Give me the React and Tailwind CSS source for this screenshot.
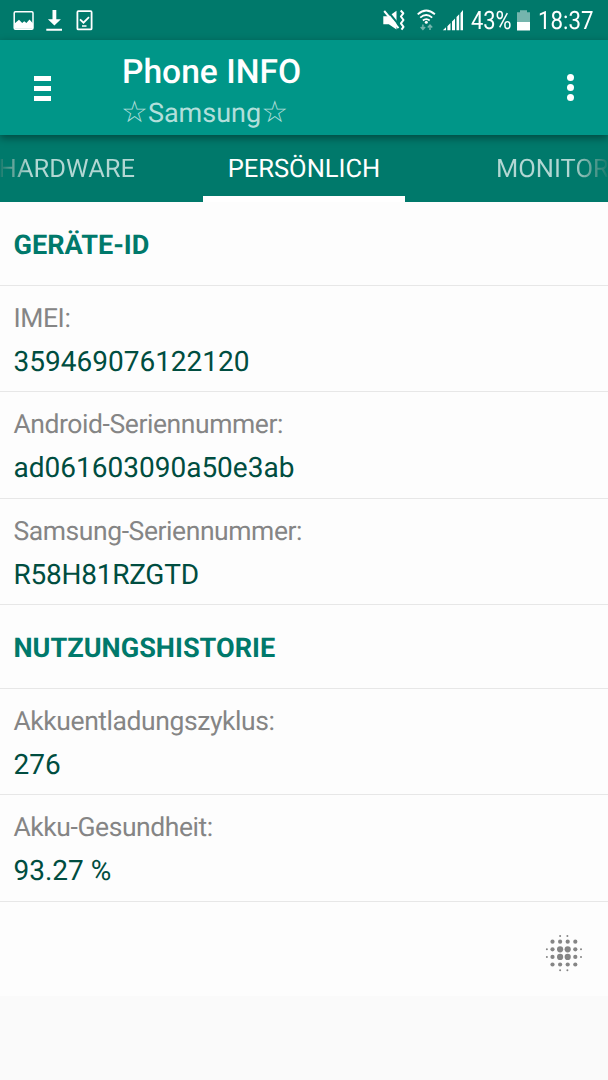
import React from 'react'

const sections = [
  {
    title: 'GERÄTE-ID',
    rows: [
      { label: 'IMEI:', value: '359469076122120' },
      { label: 'Android-Seriennummer:', value: 'ad061603090a50e3ab' },
      { label: 'Samsung-Seriennummer:', value: 'R58H81RZGTD', tight: true },
    ],
  },
  {
    title: 'NUTZUNGSHISTORIE',
    rows: [
      { label: 'Akkuentladungszyklus:', value: '276' },
      { label: 'Akku-Gesundheit:', value: '93.27 %' },
    ],
  },
]

// x, y, radius of every dot in the round spinner
const dots = [
  [14.1, 3, 1], [21.4, 3, 1],
  [6.5, 8.7, 2.1], [14.1, 8.7, 2.1], [21.7, 8.7, 2.1], [29.3, 8.7, 2.1],
  [0.9, 16.3, 1], [6.5, 16.3, 2.1], [14.1, 16.3, 3.1], [21.7, 16.3, 3.1], [29.3, 16.3, 2.1], [35, 16.3, 1],
  [0.9, 23.9, 1], [6.5, 23.9, 2.1], [14.1, 23.9, 3.1], [21.7, 23.9, 3.1], [29.3, 23.9, 2.1], [35, 23.9, 1],
  [6.5, 31.5, 2.1], [14.1, 31.5, 2.1], [21.7, 31.5, 2.1], [29.3, 31.5, 2.1],
  [14.1, 37.2, 1], [21.4, 37.2, 1],
]

const StatusBar = () => (
  <div className="h-10 bg-[#00796b] flex items-center justify-between text-white">
    <svg className="w-[110px] h-10" viewBox="0 0 110 40" fill="none">
      <rect x="14.2" y="11.7" width="18.8" height="17.6" rx="1.2" stroke="#fff" strokeWidth="1.5" />
      <path d="M14.5 23.5l4.5-3.8 3.2 3.3 2-1.7 2.2 1.7 3.1-3.6 3.5 4v5.4H14.5z" fill="#fff" />
      <path d="M52.5 10h3.8v9.2h4.6l-6.5 6.4-6.5-6.4h4.6zM46.3 28.7H62v2H46.3z" fill="#fff" />
      <rect x="77.4" y="11.2" width="14.2" height="18.2" rx="1" stroke="#fff" strokeWidth="1.8" />
      <path d="M80 19.3l3.5 3.4 5.5-5.5" stroke="#fff" strokeWidth="1.8" />
      <path d="M82 26h4.5" stroke="#fff" strokeWidth="1.5" />
    </svg>
    <div className="flex items-center">
      <svg className="w-[92px] h-10" viewBox="378 0 92 40" fill="none">
        {/* muted speaker with vibration */}
        <path d="M383.3 16.2h5.5l7.7-5.5v18.9l-7.7-5.4h-5.5z" fill="#fff" />
        <path d="M386 9l14.5 17.8" stroke="#00796b" strokeWidth="2" />
        <path d="M384.2 11l14.3 17.2" stroke="#fff" strokeWidth="2" />
        <path d="M400.7 10.5l2.6 2.8-2.4 3.2 2.6 3.5-2.6 3.4 2.6 3.4-2 2.8" stroke="#fff" strokeWidth="2" strokeLinejoin="round" />
        {/* wifi with traffic arrows */}
        <path d="M417.7 14.3q8.5-7.6 17.2 0M420.2 17.6q6-5.2 12 0M422.9 20.5q3.4-2.8 6.8 0" stroke="#fff" strokeWidth="1.8" />
        <circle cx="426.3" cy="22.2" r="1.5" fill="#fff" />
        <path d="M422.9 24.5v4.8M420.7 27l2.2 2.4 2.2-2.4M430 29.9v-4.8M427.8 27.4l2.2-2.4 2.2 2.4" stroke="#75b5ad" strokeWidth="1.5" />
        {/* signal */}
        <path d="M442.8 30.3l3.2-3v3zM447.4 26.2l3.1-3.1v7.2h-3.1zM452 21.5l3-3v11.8h-3zM456.5 17l2.7-2.7v16h-2.7zM460.5 12.9l2.5-2.8v20.2h-2.5z" fill="#fff" />
      </svg>
      <div className="w-[46px] pl-[1px] h-10 leading-[43px] text-[25.3px] whitespace-nowrap">
        <div className="origin-left scale-x-[0.865]">43%</div>
      </div>
      <svg className="w-[22px] h-10" viewBox="516 0 22 40">
        <path d="M517 12.2h3v-2h7v2h3v10h-13z" fill="#75b5ad" />
        <path d="M517 22h13v8.5h-13z" fill="#fff" />
      </svg>
      <div className="w-[70.5px] h-10 leading-[43px] text-[25.3px] whitespace-nowrap">
        <div className="origin-left scale-x-[0.88]">18:37</div>
      </div>
    </div>
  </div>
)

const Toolbar = () => (
  <header className="relative z-10 h-[95px] bg-[#009688] flex items-center shadow-[0_3px_8px_rgba(0,0,0,0.4)]">
    <div className="w-[122px] pl-[34px] pt-0.5 flex flex-col gap-[5px]">
      <div className="w-[17px] h-[5px] bg-white" />
      <div className="w-[17px] h-[5px] bg-white" />
      <div className="w-[17px] h-[5px] bg-white" />
    </div>
    <div className="flex-1 pt-2.5">
      <h1 className="text-[33.6px] leading-[40px] font-medium text-white">Phone INFO</h1>
      <p className="h-[40px] text-[27px] leading-[40px] text-[#b2dfdb] whitespace-nowrap">
        <span className="font-['DejaVu_Sans'] text-[30px] leading-[30px] -ml-px">☆</span>
        Samsung
        <span className="font-['DejaVu_Sans'] text-[30px] leading-[30px]">☆</span>
      </p>
    </div>
    <div className="w-[41px] flex flex-col gap-[3px]">
      <div className="size-[7px] rounded-full bg-white" />
      <div className="size-[7px] rounded-full bg-white" />
      <div className="size-[7px] rounded-full bg-white" />
    </div>
  </header>
)

const Tabs = () => (
  <nav className="h-[67.4px] bg-[#00796b] flex overflow-hidden text-[25.5px] leading-[68px] whitespace-nowrap">
    <div className="w-[203px] flex justify-end pr-[68px]">
      <span className="bg-linear-to-r from-[#00796b] to-[#b2d7d3] to-[22%] bg-clip-text text-transparent">
        HARDWARE
      </span>
    </div>
    <div className="w-[202px] shrink-0 text-center text-white border-b-[6px] border-white">PERSÖNLICH</div>
    <div className="w-[203px] pl-[91px]">
      <div className="bg-linear-to-r from-[#b2d7d3] from-[68%] to-[#00796b] bg-clip-text text-transparent">
        MONITOR
      </div>
    </div>
  </nav>
)

const Section = (props) => (
  <section>
    <h2 className="h-[83.5px] px-[13.5px] border-b border-[#e7e7e7] text-[27.1px] leading-[86px] font-bold text-[#00796b]">
      {props.title}
    </h2>
    {props.rows.map((row) => (
      <div
        className="h-[106.5px] px-[13.5px] pt-[11px] border-b border-[#e7e7e7] whitespace-nowrap"
        key={row.label}
      >
        <div className="text-[26.5px] leading-[43px] tracking-[-0.43px] text-[#858585]">{row.label}</div>
        <div
          className={
            row.tight
              ? 'text-[28px] leading-[43px] tracking-[-0.25px] text-[#004d40]'
              : 'text-[28px] leading-[43px] text-[#004d40]'
          }
        >
          {row.value}
        </div>
      </div>
    ))}
  </section>
)

const App = () => {
  return (
    <div className="w-[608px] h-[1080px] overflow-hidden bg-[#fafafa] font-[Roboto,sans-serif] [text-rendering:geometricPrecision]">
      <StatusBar />
      <Toolbar />
      <Tabs />
      <main className="h-[793.6px] bg-[#fdfdfd]">
        {sections.map((section) => (
          <Section key={section.title} title={section.title} rows={section.rows} />
        ))}
        <div className="flex justify-end pt-[31px] pr-[25px]">
          <svg className="w-[38px] h-[40px]" viewBox="-1 0 38 40" fill="#858585">
            {dots.map(([x, y, r], idx) => (
              <circle key={idx} cx={x} cy={y} r={r} />
            ))}
          </svg>
        </div>
      </main>
    </div>
  )
}

export default App
